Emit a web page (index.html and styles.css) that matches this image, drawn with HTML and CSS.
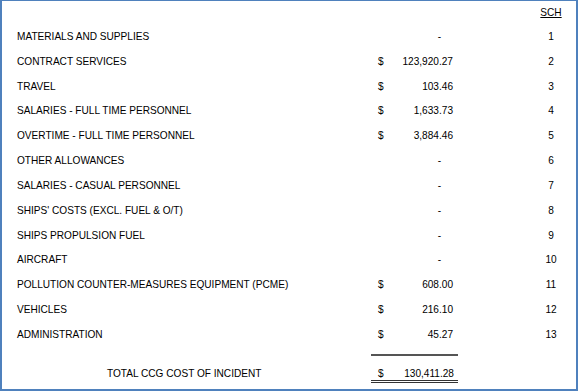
FILE: index.html
```html
<!DOCTYPE html>
<html>
<head>
<meta charset="utf-8">
<link rel="stylesheet" href="styles.css">
</head>
<body>
<div class="page">
  <div class="row head">
    <span class="label"></span><span class="cur"></span><span class="amt"></span><span class="sch"><u>SCH</u></span>
  </div>
  <div class="row"><span class="label">MATERIALS AND SUPPLIES</span><span class="cur"></span><span class="amt dash">-</span><span class="sch">1</span></div>
  <div class="row"><span class="label">CONTRACT SERVICES</span><span class="cur">$</span><span class="amt">123,920.27</span><span class="sch">2</span></div>
  <div class="row"><span class="label">TRAVEL</span><span class="cur">$</span><span class="amt">103.46</span><span class="sch">3</span></div>
  <div class="row"><span class="label">SALARIES - FULL TIME PERSONNEL</span><span class="cur">$</span><span class="amt">1,633.73</span><span class="sch">4</span></div>
  <div class="row"><span class="label">OVERTIME - FULL TIME PERSONNEL</span><span class="cur">$</span><span class="amt">3,884.46</span><span class="sch">5</span></div>
  <div class="row"><span class="label">OTHER ALLOWANCES</span><span class="cur"></span><span class="amt dash">-</span><span class="sch">6</span></div>
  <div class="row"><span class="label">SALARIES - CASUAL PERSONNEL</span><span class="cur"></span><span class="amt dash">-</span><span class="sch">7</span></div>
  <div class="row"><span class="label">SHIPS' COSTS (EXCL. FUEL &amp; O/T)</span><span class="cur"></span><span class="amt dash">-</span><span class="sch">8</span></div>
  <div class="row"><span class="label">SHIPS PROPULSION FUEL</span><span class="cur"></span><span class="amt dash">-</span><span class="sch">9</span></div>
  <div class="row"><span class="label">AIRCRAFT</span><span class="cur"></span><span class="amt dash">-</span><span class="sch">10</span></div>
  <div class="row"><span class="label">POLLUTION COUNTER-MEASURES EQUIPMENT (PCME)</span><span class="cur">$</span><span class="amt">608.00</span><span class="sch">11</span></div>
  <div class="row"><span class="label">VEHICLES</span><span class="cur">$</span><span class="amt">216.10</span><span class="sch">12</span></div>
  <div class="row"><span class="label">ADMINISTRATION</span><span class="cur">$</span><span class="amt">45.27</span><span class="sch">13</span></div>
  <div class="rule-row"><span class="rule"></span></div>
  <div class="row total">
    <span class="label">TOTAL CCG COST OF INCIDENT</span>
    <span class="money"><span class="cur">$</span><span class="amt">130,411.28</span></span>
  </div>
</div>
</body>
</html>
```
FILE: styles.css
```css
html, body {
  margin: 0;
  padding: 0;
  background: #fff;
}
.page {
  box-sizing: border-box;
  width: 578px;
  height: 391px;
  border-style: solid;
  border-color: #4f81bd;
  border-width: 1px 2px 2px 2px;
  padding: 0 0 0 15px;
  font-family: "Liberation Sans", Arial, sans-serif;
  font-size: 10.1px;
  color: #000;
}
.row {
  display: grid;
  grid-template-columns: 361px 12px 63px 78px 40px;
  height: 24.83px;
  line-height: 24.83px;
  white-space: nowrap;
}
.row.head {
  height: 24px;
  line-height: 24px;
}
.label { grid-column: 1; }
.cur { grid-column: 2; }
.amt { grid-column: 3; text-align: right; }
.amt.dash { padding-right: 12px; }
.sch { grid-column: 5; text-align: center; }
.rule-row {
  height: 8px;
  display: flex;
  align-items: flex-end;
  padding-left: 354px;
}
.rule {
  width: 87px;
  height: 2px;
  background: #555;
}
.row.total {
  height: 30px;
  line-height: 12px;
  grid-template-columns: 354px 87px;
  align-items: start;
}
.total .label {
  padding-left: 90px;
  padding-top: 12px;
}
.money {
  grid-column: 2;
  display: flex;
  padding: 12px 4px 0 7px;
  height: 12px;
  border-bottom: 3px double #333;
}
.money .cur { width: 12px; }
.money .amt { flex: 1; text-align: right; }
```
